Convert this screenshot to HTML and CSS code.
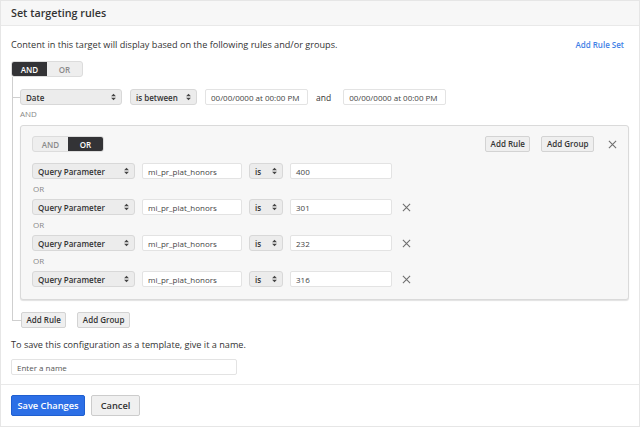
FILE: index.html
```html
<!DOCTYPE html>
<html>
<head>
<meta charset="utf-8">
<link rel="stylesheet" href="styles.css">
</head>
<body>
<div class="modal">
  <div class="header">Set targeting rules</div>
  <div class="body">
    <div class="intro">
      <span>Content in this target will display based on the following rules and/or groups.</span>
      <a class="link">Add Rule Set</a>
    </div>
    <div class="toggle">
      <span class="seg on">AND</span><span class="seg">OR</span>
    </div>
    <div class="tree">
      <div class="row date-row">
        <div class="select w-date"><span>Date</span><svg class="arr" viewBox="0 0 6 10"><path d="M0 4 L3 1 L6 4Z M0 6 L3 9 L6 6Z"/></svg></div>
        <div class="select w-op"><span>is between</span><svg class="arr" viewBox="0 0 6 10"><path d="M0 4 L3 1 L6 4Z M0 6 L3 9 L6 6Z"/></svg></div>
        <div class="input w-dt">00/00/0000 at 00:00 PM</div>
        <span class="and">and</span>
        <div class="input w-dt">00/00/0000 at 00:00 PM</div>
      </div>
      <div class="label and-label">AND</div>
      <div class="group">
        <div class="group-head">
          <div class="toggle">
            <span class="seg">AND</span><span class="seg on">OR</span>
          </div>
          <div class="group-actions">
            <button class="btn">Add Rule</button>
            <button class="btn">Add Group</button>
            <svg class="x" viewBox="0 0 10 10"><path d="M1 1 L9 9 M9 1 L1 9"/></svg>
          </div>
        </div>
        <div class="row qrow">
          <div class="select w-q"><span>Query Parameter</span><svg class="arr" viewBox="0 0 6 10"><path d="M0 4 L3 1 L6 4Z M0 6 L3 9 L6 6Z"/></svg></div>
          <div class="input w-name">mi_pr_plat_honors</div>
          <div class="select w-is"><span>is</span><svg class="arr" viewBox="0 0 6 10"><path d="M0 4 L3 1 L6 4Z M0 6 L3 9 L6 6Z"/></svg></div>
          <div class="input w-val">400</div>
        </div>
        <div class="label or-label">OR</div>
        <div class="row qrow">
          <div class="select w-q"><span>Query Parameter</span><svg class="arr" viewBox="0 0 6 10"><path d="M0 4 L3 1 L6 4Z M0 6 L3 9 L6 6Z"/></svg></div>
          <div class="input w-name">mi_pr_plat_honors</div>
          <div class="select w-is"><span>is</span><svg class="arr" viewBox="0 0 6 10"><path d="M0 4 L3 1 L6 4Z M0 6 L3 9 L6 6Z"/></svg></div>
          <div class="input w-val">301</div>
          <svg class="x" viewBox="0 0 10 10"><path d="M1 1 L9 9 M9 1 L1 9"/></svg>
        </div>
        <div class="label or-label">OR</div>
        <div class="row qrow">
          <div class="select w-q"><span>Query Parameter</span><svg class="arr" viewBox="0 0 6 10"><path d="M0 4 L3 1 L6 4Z M0 6 L3 9 L6 6Z"/></svg></div>
          <div class="input w-name">mi_pr_plat_honors</div>
          <div class="select w-is"><span>is</span><svg class="arr" viewBox="0 0 6 10"><path d="M0 4 L3 1 L6 4Z M0 6 L3 9 L6 6Z"/></svg></div>
          <div class="input w-val">232</div>
          <svg class="x" viewBox="0 0 10 10"><path d="M1 1 L9 9 M9 1 L1 9"/></svg>
        </div>
        <div class="label or-label">OR</div>
        <div class="row qrow">
          <div class="select w-q"><span>Query Parameter</span><svg class="arr" viewBox="0 0 6 10"><path d="M0 4 L3 1 L6 4Z M0 6 L3 9 L6 6Z"/></svg></div>
          <div class="input w-name">mi_pr_plat_honors</div>
          <div class="select w-is"><span>is</span><svg class="arr" viewBox="0 0 6 10"><path d="M0 4 L3 1 L6 4Z M0 6 L3 9 L6 6Z"/></svg></div>
          <div class="input w-val">316</div>
          <svg class="x" viewBox="0 0 10 10"><path d="M1 1 L9 9 M9 1 L1 9"/></svg>
        </div>
      </div>
    </div>
    <div class="tree-actions">
      <button class="btn">Add Rule</button>
      <button class="btn">Add Group</button>
    </div>
    <p class="save-text">To save this configuration as a template, give it a name.</p>
    <div class="input w-template placeholder">Enter a name</div>
  </div>
  <div class="footer">
    <button class="btn-primary">Save Changes</button>
    <button class="btn-secondary">Cancel</button>
  </div>
</div>
</body>
</html>
```

FILE: styles.css
```css
* { box-sizing: border-box; }
html, body { margin: 0; padding: 0; background: #fff; }
body { font-family: "Open Sans", "Liberation Sans", sans-serif; color: #333; }

.modal {
  width: 640px;
  height: 427px;
  border: 1px solid #e6e6e6;
  display: flex;
  flex-direction: column;
  background: #fff;
}

.header {
  height: 25px;
  flex: none;
  background: #f7f7f7;
  border-bottom: 1px solid #e9e9e9;
  display: flex;
  align-items: center;
  padding-left: 10px;
  font-size: 10.75px;
  font-weight: 600;
  color: #333;
}

.body {
  flex: 1;
  padding: 12px 14px 0 10px;
  display: flex;
  flex-direction: column;
  align-items: flex-start;
  border-bottom: 1px solid #e9e9e9;
}

.intro {
  width: 100%;
  display: flex;
  justify-content: space-between;
  align-items: center;
  font-size: 9.15px;
  line-height: 14px;
  color: #333;
}
.link {
  color: #3f7fe6;
  font-weight: 600;
  font-size: 8px;
  margin-right: 1px;
}

.toggle {
  display: flex;
  margin-top: 9px;
  height: 16px;
  border: 1px solid #dcdcdc;
  border-radius: 3px;
  overflow: hidden;
  background: #eeeeee;
}
.seg {
  width: 35px;
  display: flex;
  align-items: center;
  justify-content: center;
  font-size: 8px;
  font-weight: 600;
  color: #8a8a8a;
}
.seg.on {
  background: #333336;
  color: #fff;
}

.tree {
  margin-left: 1px;
  padding-top: 12px;
  padding-left: 7px;
  padding-bottom: 12px;
  border-left: 1px solid #cfcfcf;
  width: 610px;
}

.row {
  display: flex;
  align-items: center;
  height: 16px;
  gap: 7px;
}
.date-row { position: relative; gap: 8px; }
.date-row::before {
  content: "";
  position: absolute;
  left: -8px;
  top: 8px;
  width: 8px;
  border-top: 1px solid #cfcfcf;
}

.select {
  height: 16px;
  background: #ececec;
  border: 1px solid #d8d8d8;
  border-radius: 3px;
  display: flex;
  align-items: center;
  justify-content: space-between;
  padding: 0 5px 0 5px;
  font-size: 8px;
  font-weight: 600;
  color: #333;
}
.arr { width: 5px; height: 8px; fill: #444; }

.input {
  height: 16px;
  background: #fff;
  border: 1px solid #e3e3e3;
  border-radius: 2px;
  display: flex;
  align-items: center;
  padding: 0 5px;
  font-size: 8px;
  color: #444;
}
.placeholder { color: #555; }

.w-date { width: 102px; }
.w-op { width: 67px; }
.w-dt { width: 103px; }
.and { font-size: 8.5px; color: #333; margin: 0 4px 0 0; }
.w-q { width: 103px; }
.w-name { width: 100px; }
.w-is { width: 34px; }
.w-val { width: 102px; }
.w-template { width: 226px; margin-top: 8px; }

.label {
  font-size: 8px;
  color: #888;
  line-height: 10px;
  height: 10px;
}
.and-label { margin-top: 4px; margin-bottom: 6px; }

.group {
  width: 609px;
  background: #f7f7f7;
  border: 1px solid #dadada;
  border-radius: 3px;
  box-shadow: 0 1px 1px rgba(0,0,0,0.12);
  padding: 10px 11px 12px 11px;
}
.group-head {
  display: flex;
  justify-content: space-between;
  align-items: center;
  margin-bottom: 11px;
}
.group-head .toggle { margin-top: 0; }
.group-actions {
  display: flex;
  align-items: center;
  gap: 11px;
}

.or-label { margin: 5px 0 5px 1px; display: flex; align-items: center; }

.btn {
  height: 16px;
  padding: 0 4.5px;
  background: #efefef;
  border: 1px solid #d3d3d3;
  border-radius: 2px;
  font-family: inherit;
  font-size: 8px;
  font-weight: 600;
  color: #333;
  line-height: 1;
}

.x {
  width: 9px;
  height: 9px;
  stroke: #6f6f6f;
  stroke-width: 1.2;
  fill: none;
  margin-left: 3px;
}

.tree-actions {
  display: flex;
  gap: 11px;
  margin-left: 10px;
  position: relative;
}
.tree-actions::before {
  content: "";
  position: absolute;
  left: -9px;
  top: -1px;
  width: 9px;
  height: 9px;
  border-left: 1px solid #cfcfcf;
  border-bottom: 1px solid #cfcfcf;
}

.save-text {
  margin: 11px 0 0 0;
  font-size: 9.15px;
  line-height: 12px;
  color: #333;
}

.footer {
  height: 41px;
  flex: none;
  display: flex;
  align-items: center;
  gap: 6px;
  padding-left: 10px;
}
.btn-primary {
  height: 21px;
  width: 74px;
  background: #2c6fe6;
  border: 1px solid #1f5fd0;
  border-radius: 2px;
  color: #fff;
  font-family: inherit;
  font-size: 9.25px;
  font-weight: 600;
  padding: 0;
}
.btn-secondary {
  height: 21px;
  width: 49px;
  background: #f0f0f0;
  border: 1px solid #cccccc;
  border-radius: 2px;
  color: #333;
  font-family: inherit;
  font-size: 9.25px;
  font-weight: 600;
  padding: 0;
}
```
